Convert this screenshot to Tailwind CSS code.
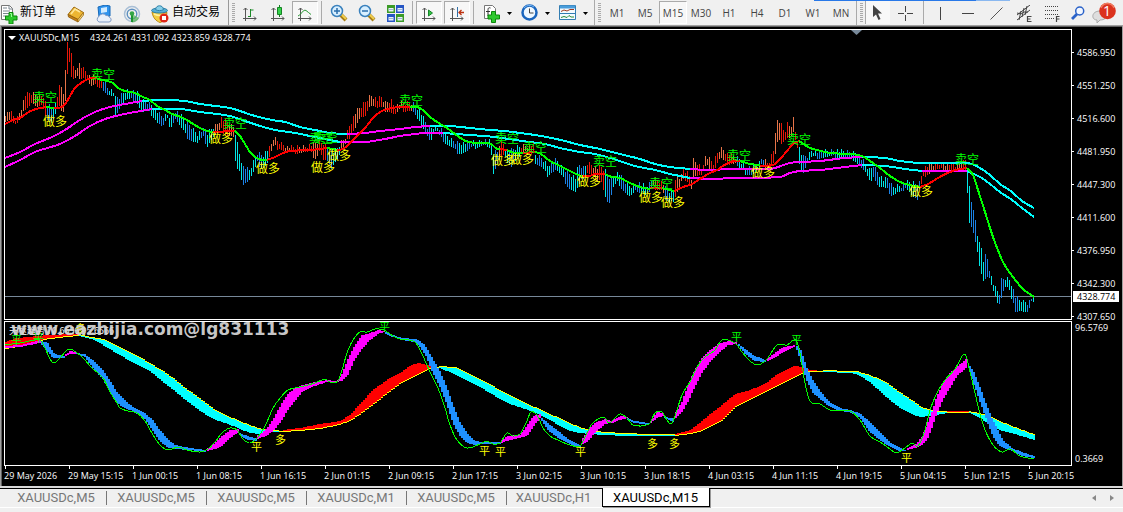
<!DOCTYPE html>
<html lang="zh-CN">
<head>
<meta charset="utf-8">
<title>XAUUSDc,M15</title>
<script src="https://cdn.jsdelivr.net/npm/@tailwindcss/browser@4"></script>
</head>
<body class="min-h-screen overflow-x-hidden bg-[#f0f0f0] font-['Open_Sans','Noto_Sans_CJK_SC',sans-serif]">
<header class="relative flex h-[25px] items-stretch overflow-hidden bg-[#f0f0f0] text-[#444] [&>*]:shrink-0">
  <div class="absolute top-0 left-[814px] h-px w-[162px] bg-[#2878e8]"></div>
  <div class="absolute top-0 left-[976px] h-px w-[34px] bg-[#8ab8f0]"></div>
  <button class="flex w-[62px] items-center text-xs leading-4 text-black whitespace-nowrap">
    <svg width="18" height="20" viewBox="0 0 18 20" class="mt-[2px] mr-[2px] shrink-0"><path d="M1.500 1.500h8l3 3v11h-11z" fill="#fff" stroke="#777"/><path d="M9 1.500v3.500h3.500M3 4h4M3 7h7M3 9.500h6M3 12h3" fill="none" stroke="#7a8790"/><path d="M9 8.500h4v3.500h4v4h-4v4H9v-4H5.500v-4H9z" fill="#2cc92c" stroke="#0b870b"/><path d="M10 9.500h1.500v3.500" stroke="#9f9" fill="none"/></svg><span class="mb-px">新订单</span>
  </button>
  <button aria-label="市场" class="flex w-7 items-center justify-center"><svg width="18" height="18" viewBox="0 0 18 18" class="mt-[2px]"><path d="M1 9.500 7 2l9.500 5.500L11 14.500z" fill="#edb632" stroke="#a06c10"/><path d="m1 9.500 10 5V17L1.500 12z" fill="#c98415" stroke="#8c5a0c" stroke-width=".8"/><path d="m11 14.500 5.500-7V10L11 17z" fill="#f9dc80" stroke="#a06c10" stroke-width=".8"/><path d="M4 9 8 4l5 3" fill="none" stroke="#ffe89a" stroke-width="1.500"/></svg></button>
  <button aria-label="云服务" class="flex w-7 items-center justify-center"><svg width="18" height="18" viewBox="0 0 18 18" class="mt-[2px]"><path d="m3 2 7-2 5 1v10L4 12z" fill="#2e93ee" stroke="#1669b8"/><path d="m6 3 6-1v5L6 8z" fill="#cfeaff"/><path d="M4 17a3 3 0 0 1 0-5.500 4 4 0 0 1 7-1 3 3 0 0 1 3.500 2 2.300 2.300 0 0 1-.5 4.500z" fill="#e9f0fa" stroke="#7f99c4"/></svg></button>
  <button aria-label="信号" class="flex w-7 items-center justify-center"><svg width="18" height="18" viewBox="0 0 18 18" fill="none" class="mt-[2px]"><circle cx="9" cy="9" r="7.500" stroke="#a9bfd6" stroke-width="1.500"/><circle cx="9" cy="9" r="4.800" stroke="#5d8fc0" stroke-width="1.400"/><path d="M9 9v8.500A8 8 0 0 0 16 13z" fill="#54b554" opacity=".7"/><path d="M9 9v8" stroke="#1c9430" stroke-width="2"/><circle cx="9" cy="8.500" r="2.300" fill="#33a545"/></svg></button>
  <button class="flex w-20 items-center pl-[5px] text-xs leading-4 text-black whitespace-nowrap">
    <svg width="18" height="18" viewBox="0 0 18 18" class="mt-[2px] mr-[3px] shrink-0"><path d="M1 7c1 6 4 9 8 10.500 4-1 6-4 7-10z" fill="#f4ce40" stroke="#bd8b16"/><path d="M3 9c4 2 8 2 11 0" fill="none" stroke="#fff0a0" stroke-width="1.500"/><ellipse cx="8.500" cy="5.500" rx="8" ry="2.500" fill="#58afd4" stroke="#2e81a8"/><path d="M4.500 4.500C5-.5 12-.5 12.500 4.500c-2 1.500-6 1.500-8 0z" fill="#87cfe9" stroke="#2e81a8"/><circle cx="13" cy="13" r="4.500" fill="#de2617"/><path d="M11 11h4v4h-4z" fill="#fff"/></svg><span class="mb-px">自动交易</span>
  </button>
  <div class="flex w-[10px] items-center gap-[3px] pl-[2px]"><i class="h-full w-px bg-[#999]"></i><i class="h-5 w-[3px] bg-[repeating-linear-gradient(#aaa_0_1px,#f0f0f0_1px_2px)]"></i></div>
  <button aria-label="柱状图" class="flex w-7 items-center justify-center"><svg width="16" height="16" viewBox="0 0 16 16" fill="none" stroke="#555" class="mt-[3px]"><path d="M3.500 2v13M1 12.500h13M1.500 4l2-2 2 2M12 10.500l2 2-2 2"/><path d="M8.500 3v8M8.500 4h3M6 10.500h2.500" stroke="#1c8a28"/></svg></button>
  <button aria-label="蜡烛图" class="flex w-7 items-center justify-center"><svg width="16" height="18" viewBox="0 0 16 18" fill="none" stroke="#555" class="mt-px"><path d="M3.500 4v13M1 14.500h13M1.500 6l2-2 2 2M12 12.500l2 2-2 2"/><path d="M9.500 1v12" stroke="#178224"/><path d="M7.500 3.500h4v7h-4z" fill="#33d34a" stroke="#178224"/></svg></button>
  <button aria-label="折线图" aria-pressed="true" class="my-px flex w-[26px] items-center justify-center border border-[#aaa] border-r-white border-b-white bg-[#f7f7f7]"><svg width="16" height="16" viewBox="0 0 16 16" fill="none" stroke="#555" class="mt-[3px]"><path d="M3.500 2v13M1 12.500h13M1.500 4l2-2 2 2M12 10.500l2 2-2 2"/><path d="M1 10c4-2 5-7 8-5.500 2 1 3 3 5 4" stroke="#2a9a35"/></svg></button>
  <div class="flex w-[7px] justify-center"><i class="my-px w-px bg-[#aaa]"></i></div>
  <button aria-label="放大" class="flex w-7 items-center justify-center"><svg width="18" height="18" viewBox="0 0 18 18"><path d="m10 10 6 6" stroke="#a67c13" stroke-width="4"/><path d="m11 10 5 5" stroke="#f1cf50" stroke-width="2"/><circle cx="7" cy="7" r="5.500" fill="#d8efff" stroke="#3a81bd" stroke-width="1.500"/><path d="M7 4v6M4 7h6" stroke="#2a6eac" stroke-width="1.500"/></svg></button>
  <button aria-label="缩小" class="flex w-7 items-center justify-center"><svg width="18" height="18" viewBox="0 0 18 18"><path d="m10 10 6 6" stroke="#a67c13" stroke-width="4"/><path d="m11 10 5 5" stroke="#f1cf50" stroke-width="2"/><circle cx="7" cy="7" r="5.500" fill="#d8efff" stroke="#3a81bd" stroke-width="1.500"/><path d="M4 7h6" stroke="#2a6eac" stroke-width="1.500"/></svg></button>
  <button aria-label="平铺窗口" class="flex w-7 items-center justify-center"><svg width="17" height="17" viewBox="0 0 17 17" class="mt-[2px]"><path d="M0 0h8v8H0zM9 9h8v8H9z" fill="#3a9a27"/><path d="M9 0h8v8H9zM0 9h8v8H0z" fill="#2455c4"/><path d="M1.500 3h5v3.500h-5zM10.500 3h5v3.500h-5zM1.500 12h5v3.500h-5zM10.500 12h5v3.500h-5z" fill="#e9f2fb"/><path d="M2 4.500h4M11 4.500h4M2 13.500h4M11 13.500h4" stroke="#9eb6d2"/></svg></button>
  <div class="flex w-[7px] justify-center"><i class="my-px w-px bg-[#aaa]"></i></div>
  <button aria-label="自动滚动" aria-pressed="true" class="my-px flex w-[26px] items-center justify-center border border-[#aaa] border-r-white border-b-white bg-[#f7f7f7]"><svg width="16" height="16" viewBox="0 0 16 16" fill="none" stroke="#555" class="mt-[3px]"><path d="M3.500 2v13M1 12.500h13M1.500 4l2-2 2 2M12 10.500l2 2-2 2"/><path d="m7.500 4 4 3-4 3z" fill="#35c446" stroke="#17862a"/></svg></button>
  <button aria-label="图表平移" aria-pressed="true" class="my-px ml-[2px] flex w-[26px] items-center justify-center border border-[#aaa] border-r-white border-b-white bg-[#f7f7f7]"><svg width="16" height="16" viewBox="0 0 16 16" fill="none" stroke="#555" class="mt-[3px]"><path d="M3.500 2v13M1 12.500h13M1.500 4l2-2 2 2M12 10.500l2 2-2 2"/><path d="M8.500 1v10" stroke="#2f70a8"/><path d="M15 6.500h-5M12.500 4 10 6.500 12.500 9" stroke="#bd3311" stroke-width="1.300"/></svg></button>
  <div class="flex w-[7px] justify-center"><i class="my-px w-px bg-[#aaa]"></i></div>
  <button aria-label="指标" class="flex w-[38px] items-center gap-[7px] pl-[6px]"><svg width="17" height="19" viewBox="0 0 17 19" class="mt-[2px]"><path d="M1.500 1.500h8l3 3v10h-11z" fill="#fff" stroke="#777"/><path d="M7.500 4C5 3 5 5 5 7v5M3 7.500h4" fill="none" stroke="#333"/><path d="M8.500 7.500h4V11h4v4h-4v3.500h-4V15H5v-4h3.500z" fill="#2cc92c" stroke="#0b870b"/></svg><svg width="5" height="3" class="mt-px"><path d="M0 0h5L2.500 3z"/></svg></button>
  <button aria-label="周期" class="flex w-[38px] items-center gap-[7px] pl-[6px]"><svg width="17" height="17" viewBox="0 0 17 17"><circle cx="8.500" cy="8.500" r="7" fill="#eff8ff" stroke="#1b66be" stroke-width="2.500"/><path d="M3 4a7 7 0 0 1 10-1" fill="none" stroke="#75b6f2"/><path d="M8.500 4.500v4.500h4" fill="none" stroke="#444"/></svg><svg width="5" height="3" class="mt-px"><path d="M0 0h5L2.500 3z"/></svg></button>
  <button aria-label="模板" class="flex w-[38px] items-center gap-[7px] pl-[6px]"><svg width="17" height="15" viewBox="0 0 17 15"><path d="M.5.500h16v14H.5z" fill="#f5fbff" stroke="#327db2"/><path d="M1 2h15" stroke="#4a9ddb" stroke-width="3"/><path d="M1 8.500h15" stroke="#327db2"/><path d="m2 6.500 3-1.500 3 1 3-1.500h4" stroke="#a13b22" fill="none"/><path d="m2 12.500 3-1 3 1 2-2 2 1.500h3" stroke="#298a35" fill="none"/></svg><svg width="5" height="3" class="mt-px"><path d="M0 0h5L2.500 3z"/></svg></button>
  <div class="flex w-3 items-center gap-[3px] pl-[3px]"><i class="h-full w-px bg-[#aaa]"></i><i class="h-5 w-[3px] bg-[repeating-linear-gradient(#aaa_0_1px,#f0f0f0_1px_2px)]"></i></div>
  <nav aria-label="时间周期" class="flex text-[10px] leading-3 [&>button]:w-7 [&>button]:pt-px">
    <button>M1</button><button>M5</button><button aria-pressed="true" class="my-px border border-[#aaa] border-r-white border-b-white bg-[#f7f7f7]">M15</button><button>M30</button><button>H1</button><button>H4</button><button>D1</button><button>W1</button><button>MN</button>
  </nav>
  <div class="flex w-[9px] items-center gap-[3px] pl-px"><i class="h-full w-px bg-[#aaa]"></i><i class="h-5 w-[3px] bg-[repeating-linear-gradient(#aaa_0_1px,#f0f0f0_1px_2px)]"></i></div>
  <button aria-label="光标" aria-pressed="true" class="my-px mr-[2px] ml-px flex w-[25px] items-center border-l border-[#aaa] bg-[#f8f8f8] pl-[6px]"><svg width="11" height="16" viewBox="0 0 11 16"><path d="M1 0v12l3-2.500L6.500 15l2-1L6 8.500h4z" fill="#444"/></svg></button>
  <button aria-label="十字线" class="flex w-7 items-center justify-center"><svg width="16" height="16" viewBox="0 0 16 16" stroke="#444" class="mt-[2px]"><path d="M7.500 0v6M7.500 9v6M0 7.500h6M9 7.500h6"/></svg></button>
  <div class="flex w-[6px] justify-center"><i class="my-px w-px bg-[#aaa]"></i></div>
  <button aria-label="垂直线" class="flex w-7 items-center justify-center"><i class="mt-[2px] h-[13px] w-px bg-[#444]"></i></button>
  <button aria-label="水平线" class="flex w-7 items-center justify-center"><i class="mt-[2px] h-px w-3 bg-[#444]"></i></button>
  <button aria-label="趋势线" class="flex w-7 items-center justify-center"><svg width="13" height="13" class="mt-[2px]"><path d="M.5 12.500 12.500.500" stroke="#555"/></svg></button>
  <button aria-label="通道" class="flex w-7 items-center justify-center"><svg width="17" height="17" viewBox="0 0 17 17" fill="none" stroke="#444" class="mt-[2px]"><path d="M1 10 14 0M1 15 14 5"/><path d="M3 15 5 6M6 12 8 3M9 10l2-9M1 8l4 1 3-2 4 0"/><path d="M15.500 11.500h-4v5h4M11.500 14h3" stroke-width="1.200"/></svg></button>
  <button aria-label="斐波纳契" class="flex w-7 items-center justify-center"><svg width="16" height="17" viewBox="0 0 16 17" fill="none" stroke="#444" class="mt-[2px]"><path d="M1 1.500h14M1 5.500h14M1 9.500h14M1 13.500h9" stroke-dasharray="1 1"/><path d="M12.500 17v-5.500h3M12.500 14h3" stroke-width="1.200"/></svg></button>
  <button aria-label="搜索" class="flex w-6 items-center justify-center"><svg width="14" height="14" viewBox="0 0 14 14"><path d="m1 13 5-5" stroke="#2a62c9" stroke-width="2.800"/><circle cx="8.700" cy="5" r="4" fill="#f2f7ff" stroke="#2a62c9" stroke-width="1.500"/></svg></button>
  <button aria-label="消息 1" class="flex w-7 items-center justify-center"><svg width="24" height="24" viewBox="0 0 24 24"><path d="M8 10c-9 0-9 9-3 9v3l3-3c9 0 8-9 0-9z" fill="#dedede" stroke="#aaa"/><circle cx="15.500" cy="10" r="8.300" fill="#db321d"/><path d="M9 7a7 7 0 0 1 13 0" fill="none" stroke="#f07a5e" stroke-width="1.500"/><text x="11" y="15" font-family="Open Sans" font-size="14" fill="#fff">1</text></svg></button>
</header>

<main class="border-t border-l border-[#a0a0a0] bg-[#a0a0a0]">
  <section aria-label="XAUUSDc,M15" class="relative mr-px border-t border-l border-[#606060] bg-black pt-[2px] pl-[2px] text-[9px] leading-3 text-white">
    <div class="flex">
      <div class="min-w-0 flex-1">
        <div class="relative border border-white">
          <svg id="price" class="block h-[289px] w-full" viewBox="5 30 1066 289" preserveAspectRatio="xMinYMin meet" font-family="Noto Sans CJK SC, sans-serif" font-size="12">
            <path d="M5 296.500H1071" stroke="#778899"/>
            <path d="M851 30h11l-5.500 5z" fill="#778899"/>
            <path d="M8 36h8l-4 4z" fill="#fff"/>
            <text x="19" y="41" fill="#fff" font-size="9" font-family="Open Sans">XAUUSDc,M15</text>
            <text x="90" y="41" fill="#fff" font-size="9" font-family="Open Sans">4324.261 4331.092 4323.859 4328.774</text>
          </svg>
        </div>
        <div class="relative mt-px border border-white">
          <svg id="osc" class="block h-[143px] w-full overflow-hidden" viewBox="5 322 1066 143" preserveAspectRatio="xMinYMin meet" font-family="Noto Sans CJK SC, sans-serif" font-size="11"></svg>
        </div>
      </div>
      <div class="flex w-[50px] shrink-0 flex-col">
        <div class="relative h-[292px] overflow-hidden pt-[18px]">
          <ol id="prices"></ol>
          <output class="absolute top-[262px] left-px w-[46px] bg-white pl-1 leading-[11px] text-black">4328.774</output>
        </div>
        <div class="flex h-[145px] flex-col justify-between pt-px pb-px pl-[3px]"><span>96.5769</span><span>0.3669</span></div>
      </div>
    </div>
    <ol id="times" class="flex h-5 overflow-hidden"></ol>
  </section>
</main>

<footer class="border-t-2 border-[#d8d8d8]">
  <nav aria-label="图表" class="flex h-5 items-stretch border-t border-b border-t-black border-b-white pl-[7px] font-['Roboto',sans-serif] text-[13px] leading-4 text-[#777]">
    <button class="relative w-[100px] pr-[2px] after:absolute after:top-[2px] after:right-0 after:h-[14px] after:w-px after:bg-[#777]">XAUUSDc,M5</button>
    <button class="relative w-[100px] pr-[2px] after:absolute after:top-[2px] after:right-0 after:h-[14px] after:w-px after:bg-[#777]">XAUUSDc,M5</button>
    <button class="relative w-[100px] pr-[2px] after:absolute after:top-[2px] after:right-0 after:h-[14px] after:w-px after:bg-[#777]">XAUUSDc,M5</button>
    <button class="relative w-[100px] pr-[2px] after:absolute after:top-[2px] after:right-0 after:h-[14px] after:w-px after:bg-[#777]">XAUUSDc,M1</button>
    <button class="relative w-[100px] pr-[2px] after:absolute after:top-[2px] after:right-0 after:h-[14px] after:w-px after:bg-[#777]">XAUUSDc,M5</button>
    <button class="w-[95px] pr-[2px]">XAUUSDc,H1</button>
    <button aria-current="page" class="-mt-px w-[108px] border border-t-0 border-black bg-white pt-px pr-px text-black shadow-[1px_1px_0_#999]">XAUUSDc,M15</button>
    <div class="mr-[9px] ml-auto flex items-center gap-[14px]">
      <button aria-label="向左"><svg width="4" height="6"><path d="M4 0v6L0 3z" fill="#888"/></svg></button>
      <button aria-label="向右"><svg width="4" height="6"><path d="M0 0v6l4-3z" fill="#888"/></svg></button>
    </div>
  </nav>
</footer>

<script>
const NS = 'http://www.w3.org/2000/svg';
const price = document.getElementById('price'), osc = document.getElementById('osc');
function add(svg, tag, attrs, text) {
  const el = document.createElementNS(NS, tag);
  for (const k in attrs) el.setAttribute(k, attrs[k]);
  if (text) el.textContent = text;
  svg.appendChild(el);
}
const parse = s => s.trim().split(/\s+/).map(p => p.split(',').map(Number));
function at(pts, x, k) {
  let i = 1;
  while (i < pts.length - 1 && pts[i][0] < x) i++;
  const a = pts[i - 1], b = pts[i], t = Math.max(0, Math.min(1, (x - a[0]) / (b[0] - a[0])));
  return a[k] + (b[k] - a[k]) * t;
}

/* Price bars: x,high,low */
const bars = parse(`5,118,124 8,109,117 16,120,125 21,107,118 25,95,108 32,93,102 36,95,108 43,95,107 46,105,118 51,108,123 55,105,115 57,97,108 59,83,108 63,93,110 65,67,100 67,43,73 69,47,62 71,55,77 73,66,80 77,70,78 79,63,77 83,68,77 87,72,80 90,78,87 97,77,85 101,80,87 103,80,90 107,87,95 113,92,98 115,98,115 119,97,108 125,91,100 132,90,100 137,93,103 141,100,112 147,102,112 152,105,115 157,112,122 162,117,127 167,115,120 170,117,127 175,110,118 180,115,127 185,122,135 191,127,140 197,133,143 203,130,138 207,133,145 213,127,137 217,123,133 221,118,130 227,123,135 233,127,137 235,133,162 237,143,170 239,153,173 243,167,183 249,170,180 253,162,173 257,153,163 262,155,168 267,150,163 270,148,155 273,138,147 280,143,148 287,147,153 300,147,152 310,145,153 316,143,158 319,142,150 323,143,160 327,147,162 330,150,168 334,152,162 338,147,157 341,142,150 345,137,145 350,123,135 355,113,127 360,107,118 365,102,118 368,97,105 372,95,105 377,100,108 381,97,108 385,103,110 391,100,112 394,107,115 400,103,110 410,103,110 413,103,112 418,108,122 423,118,127 427,127,135 430,128,143 434,127,132 440,127,133 444,133,143 450,140,147 456,142,152 464,143,153 474,142,147 484,140,145 490,142,150 493,152,172 497,152,163 500,140,158 504,145,155 508,152,168 515,148,160 523,145,153 533,145,152 535,155,163 541,158,168 547,165,175 551,162,172 556,160,170 562,168,178 569,173,188 575,178,192 578,165,187 583,168,177 587,163,172 592,165,175 597,168,183 601,167,180 606,172,200 609,177,203 613,177,188 618,172,182 624,182,192 630,187,197 637,182,190 645,187,195 650,183,192 653,178,187 662,182,190 665,188,200 670,192,205 673,190,200 675,178,195 679,178,187 682,168,178 688,175,185 691,178,187 693,160,175 697,163,175 701,168,175 705,157,167 710,160,167 713,163,172 717,153,163 720,148,157 724,150,163 728,155,163 735,157,163 738,158,168 745,167,173 752,167,175 758,165,170 762,157,165 768,163,167 773,150,163 775,135,155 777,120,143 780,122,142 784,133,140 787,123,137 790,127,138 793,118,133 797,143,150 799,147,162 802,157,174 807,156,163 811,150,158 819,152,157 835,150,157 845,152,157 855,152,160 860,157,167 865,165,173 869,170,182 873,165,175 878,173,187 883,180,188 887,178,190 892,187,195 897,185,192 903,185,192 907,182,188 912,183,195 917,185,200 919,182,190 921,175,185 924,167,175 930,165,172 937,163,170 945,163,170 955,165,170 962,162,170 966,158,170 967,168,192 969,187,223 972,208,230 975,220,243 978,242,260 981,248,272 983,260,280 986,253,277 989,268,278 992,282,290 996,290,300 999,293,302 1001,280,297 1004,278,287 1008,278,287 1011,283,300 1015,297,310 1019,300,310 1024,302,312 1028,303,313 1031,298,303 1033,292,300`);
const upRanges = [[5,45],[56,102],[214,234],[268,326],[340,411],[499,504],[520,534],[586,604],[652,663],[674,736],[765,798],[920,966]];
const barPaths = { '#ff1a0a': '', '#ff7f50': '', '#00ffff': '', '#1e90ff': '' };
for (let x = 5, n = 0; x <= 1033; x += 2, n++) {
  const up = upRanges.some(r => x >= r[0] && x <= r[1]);
  const j = (n * 37 % 11) - 5, j2 = (n * 53 % 9) - 4;
  const alt = (n * 29 % 7) < 3;
  const color = up ? (alt ? '#ff7f50' : '#ff1a0a') : (alt ? '#1e90ff' : '#00ffff');
  barPaths[color] += `M${x + .5} ${Math.round(at(bars, x, 1) + j * .5)}V${Math.round(at(bars, x, 2) + j2 * .5)}`;
}
for (const c in barPaths) add(price, 'path', { d: barPaths[c], stroke: c, 'stroke-opacity': .9, fill: 'none' });

/* Smooth curve through the given points */
function line(svg, color, w, s) {
  const p = parse(s);
  let d = `M${p[0]}`;
  for (let i = 0; i < p.length - 1; i++) {
    const a = p[i - 1] || p[i], b = p[i], c = p[i + 1], e = p[i + 2] || c, k = (c[0] - b[0]) / 3;
    const s1 = (c[1] - a[1]) / (c[0] - a[0]), s2 = (e[1] - b[1]) / (e[0] - b[0]);
    d += `C${b[0] + k} ${b[1] + s1 * k} ${c[0] - k} ${c[1] - s2 * k} ${c[0]} ${c[1]}`;
  }
  add(svg, 'path', { d, fill: 'none', stroke: color, 'stroke-width': w, 'shape-rendering': 'crispEdges' });
}
const M = '#ff00ff', C = '#00ffff', R = '#ff0000', G = '#00ff00', B = '#1e90ff', Y = '#ffff00';
[
 [M,'5,158 20,152 35,144 52,137 65,130 80,120 95,112 110,107 125,104 142,101'],
 [C,'142,101 160,100 185,101 200,104 230,108 240,111 255,116 272,120 285,122 300,127 315,130 330,133 347,134'],
 [M,'347,134 365,133 380,131 400,129 415,127 430,126'],
 [C,'430,126 450,126 470,128 490,130 505,131 520,133 535,135 547,137 565,141 580,145 600,149 620,154 640,159 655,164 670,167 690,169'],
 [M,'690,169 710,170 730,169 770,169 775,168 790,163 800,162 820,161 845,158 862,157'],
 [C,'862,157 885,158 900,161 920,163 965,163 972,164 980,168 990,175 1000,184 1012,192 1022,201 1034,208'],
 [M,'5,167 20,160 35,152 60,144 75,136 90,126 105,119 120,115 135,112 152,109'],
 [C,'152,109 180,109 200,112 230,116 245,121 260,126 275,130 295,133 310,136 325,139 340,142'],
 [M,'340,142 365,142 385,139 400,136 415,134 425,133 443,133'],
 [C,'443,133 470,135 495,137 515,140 530,142 545,144 560,148 580,152 595,154 610,158 635,166 655,170 670,174 680,176 690,178'],
 [M,'690,178 715,179 730,178 780,177 790,173 800,171 820,170 845,167 862,165'],
 [C,'862,165 885,166 905,169 922,171'],[M,'922,171 967,171'],
 [C,'967,171 980,177 990,184 1000,192 1012,200 1022,208 1034,217'],
 [R,'5,124 13,120 20,118 27,113 33,110 40,108 46,107'],[G,'46,107 54,108'],
 [R,'54,108 62,107 66,103 70,96 75,88 81,83 88,79 97,78'],
 [G,'97,79 107,81 113,83 118,88 125,91 135,93 143,97 150,100 157,106 165,110 172,114 181,117 187,120 193,124 200,128 207,131 213,132'],
 [R,'213,132 235,131'],[G,'235,131 240,136 245,144 250,152 255,157 262,160 267,160'],
 [R,'267,160 275,157 283,153 290,151 310,150 327,148'],[G,'327,148 337,150'],
 [R,'337,150 343,149 349,144 357,136 365,128 373,118 380,112 388,109 398,107 410,107'],
 [G,'410,107 417,107 423,110 430,117 437,122 447,128 455,134 462,139 468,142 480,143 491,144 497,149 504,149'],[R,'500,149 507,150'],
 [G,'507,150 515,153 523,153'],[R,'523,153 535,152'],
 [G,'535,152 541,154 550,161 560,166 570,171 578,175 582,176'],[R,'582,176 590,176 594,174 605,174'],
 [G,'605,174 612,177 620,178 630,183 640,187 650,189'],[R,'650,188 662,188'],[G,'662,188 670,190 674,191'],
 [R,'674,191 683,187 692,184 700,179 708,174 717,170 723,166 730,162 740,161'],
 [G,'740,161 750,164 760,165'],[R,'760,166 773,165 780,159 787,151 793,144 799,141'],
 [G,'799,141 805,145 810,148 817,150 830,153 850,154 862,156 870,161 880,168 890,176 900,182 910,185 920,187'],
 [R,'920,187 928,184 938,178 950,172 960,169 967,168'],
 [G,'967,168 973,175 978,190 985,212 993,237 1003,262 1013,277 1023,289 1034,297']
].forEach(([c, s]) => line(price, c, 2, s));

function labels(svg, color, text, s) {
  parse(s).forEach(([x, y]) => add(svg, 'text', { x, y, fill: color }, text));
}
labels(price, G, '卖空', '33,102 91,79 223,128 309,143 314,142 399,105 495,143 523,152 593,166 649,188 727,160 787,144 955,164');
labels(price, Y, '做多', '43,126 209,143 256,173 311,172 327,160 491,165 510,164 577,186 639,202 661,207 751,177 909,196');

/* Oscillator bands: x,top,bottom drawn as 2px columns */
function band(color, s, edge) {
  const p = parse(s), end = p[p.length - 1][0];
  let d = '', e = '';
  for (let x = p[0][0]; x < end; x += 2) {
    const t = Math.round(at(p, x + 1, 1)), b = Math.max(t + 1, Math.round(at(p, x + 1, 2)));
    d += `M${x} ${t}h2V${b}h-2z`;
    e += `M${x} ${edge === 'top' ? t : b - 1}h2v1h-2z`;
  }
  add(osc, 'path', { d, fill: color, 'shape-rendering': 'crispEdges' });
  if (edge) add(osc, 'path', { d: e, fill: Y, 'shape-rendering': 'crispEdges' });
}
band(R,'5,342,349 17,338,347 37,336,342 50,335,339 67,334,337 79,334,336','bottom');
band(C,'79,334,336 92,337,339 103,339,345 113,343,351 125,350,358 140,357,366 150,363,371 162,370,381 175,379,391 187,389,401 200,398,411 213,408,419 225,415,423 238,420,428 250,425,433 262,429,434 275,430,432 283,431,432','top');
band(R,'283,430,432 300,428,431 320,424,429 340,421,425 350,415,421 360,404,415 373,390,405 387,380,394 400,373,384 413,364,377 420,363,374 430,366,369 439,367,368','bottom');
band(C,'439,366,368 455,367,374 465,371,379 480,379,387 495,387,396 510,395,404 525,403,409 540,409,415 555,416,423 570,423,431 580,427,433 590,430,434 605,432,435 625,433,436 650,434,436 675,434,436','top');
band(R,'675,434,436 690,430,434 700,423,432 710,414,427 722,405,421 735,394,408 750,390,400 765,384,393 777,374,386 795,366,377 803,367,373 811,370,372 823,371,372','bottom');
band(C,'823,370,372 850,371,373 857,371,374 870,375,382 885,381,396 900,392,408 915,402,416 922,407,417 935,411,415 947,411,413','top');
band(R,'947,411,413 960,411,413 969,411,413','bottom');
band(C,'969,411,413 980,413,418 990,416,425 1000,421,430 1015,427,434 1034,434,440','top');

band(M,'5,346,348 20,345,347 40,340,343');
band(B,'41,341,344 48,343,352 53,352,358 58,355,358 65,356,358');
band(M,'65,355,357 70,351,354 76,352,354');
band(B,'76,353,354 85,354,357 93,360,368 103,370,379 110,380,392 117,392,403 125,400,408 133,407,411 145,413,419 153,420,431 160,430,441 168,439,448 175,445,449 190,448,450 206,450,452');
band(M,'207,449,451 215,443,449 222,436,446 230,430,438 239,429,432');
band(B,'239,432,434 245,435,439 250,437,440 256,438,441');
band(M,'257,436,439 263,432,437 268,427,435 275,416,429 282,403,420 288,394,410 295,388,401 303,385,391 315,382,386 327,380,382 337,381,382 342,374,381 348,359,375 355,345,359 362,335,349 370,333,340 378,330,334 385,331,332');
band(B,'385,332,333 393,335,337 403,338,340 415,339,342 420,341,347 425,345,354 432,357,371 440,371,387 447,387,405 453,405,423 460,422,436 467,433,443 474,440,445 480,442,444 500,442,444');
band(M,'501,441,443 507,436,441 520,435,438 527,426,436 533,416,427 540,414,418');
band(B,'541,417,420 548,423,430 557,430,437 567,438,443 575,442,446 581,446,448');
band(M,'582,440,444 588,430,441 595,423,433 605,419,424 612,421,423 620,416,420 627,417,418');
band(B,'627,418,419 635,421,423 649,423,425');
band(M,'650,422,424 657,412,418 663,413,416');
band(B,'664,415,417 668,418,420 674,418,422');
band(M,'675,414,419 682,402,412 688,385,402 695,370,387 702,358,373 710,350,362 720,343,352 728,341,345 737,342,344');
band(B,'738,343,345 745,349,354 755,356,361 766,360,362');
band(M,'767,359,361 775,353,358 783,347,352 795,345,347');
band(B,'796,345,347 801,350,362 807,368,381 813,380,393 820,391,399 830,402,407 840,408,411 850,410,412 860,413,417 870,422,432 880,432,440 890,442,447 900,448,451 906,450,451');
band(M,'907,448,450 915,445,448 922,437,445 927,425,440 932,412,428 937,396,413 943,383,400 950,373,388 957,367,376 967,358,367');
band(B,'969,365,368 973,370,382 978,382,396 983,395,410 988,408,424 993,420,436 998,430,444 1003,440,448 1012,448,451 1022,452,456 1034,456,458');
line(osc, G, 1, '5,345 20,343 40,340 45,348 50,359 54,363 60,358 66,351 70,349 76,352 83,358 92,368 103,378 110,392 117,403 120,408 128,411 137,413 145,421 153,435 160,445 168,450 178,447 187,450 200,452 208,449 215,442 222,433 230,428 237,430 243,439 250,443 258,437 266,424 273,408 281,397 288,390 300,387 315,383 325,379 330,382 338,381 342,370 348,350 355,337 360,332 367,332 375,329 384,330 393,336 400,339 415,342 422,354 430,372 438,388 445,408 450,425 457,440 467,448 480,444 487,441 493,444 500,443 507,433 513,436 520,434 526,423 531,412 537,415 543,428 550,436 560,441 570,445 580,446 585,437 592,424 604,417 609,423 620,414 627,418 633,425 649,424 655,413 662,412 667,420 671,424 675,416 682,395 690,382 697,367 705,357 715,350 722,340 735,343 742,352 750,361 758,365 767,359 777,345 787,345 796,340 800,353 805,383 810,401 820,404 830,410 850,411 860,420 870,436 880,442 890,449 896,453 905,448 912,443 918,446 925,430 930,410 937,393 945,380 955,369 965,354 970,372 975,393 980,414 985,430 993,445 1002,452 1010,449 1020,456 1034,459');
labels(osc, G, '平', '11,344 33,342 379,331 731,341 791,344');
labels(osc, Y, '平', '251,451 479,455 495,456 575,456 901,462');
labels(osc, Y, '多', '75,333 275,444 647,448 669,448');
add(osc, 'text', { x: 9, y: 334, fill: '#fff', 'font-size': 9 }, '天枢趋势 70.6656 95.6566');
add(osc, 'text', { x: 11, y: 335, fill: '#d4d4d4', 'fill-opacity': .95, 'font-size': 17, 'font-weight': 700, 'font-family': 'DejaVu Sans, sans-serif' }, 'www.eazhijia.com@lg831113');

document.getElementById('prices').innerHTML = ['4586.950','4551.250','4516.600','4481.950','4447.300','4411.600','4376.950','4342.300','4307.650']
  .map(v => `<li class="flex h-[33px] items-start gap-[3px]"><i class="mt-[5px] h-px w-[2px] bg-white"></i>${v}</li>`).join('');
document.getElementById('times').innerHTML = ['29 May 2026','29 May 15:15','1 Jun 00:15','1 Jun 08:15','1 Jun 16:15','2 Jun 01:15','2 Jun 09:15','2 Jun 17:15','3 Jun 02:15','3 Jun 10:15','3 Jun 18:15','4 Jun 03:15','4 Jun 11:15','4 Jun 19:15','5 Jun 04:15','5 Jun 12:15','5 Jun 20:15']
  .map(v => `<li class="w-16 shrink-0 whitespace-nowrap"><i class="mb-px ml-px block h-[3px] w-px bg-white"></i>${v}</li>`).join('');
</script>
</body>
</html>
